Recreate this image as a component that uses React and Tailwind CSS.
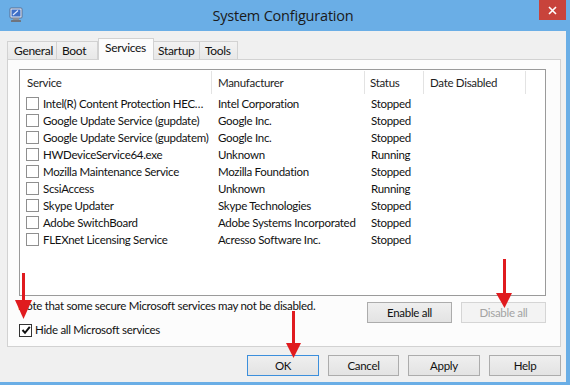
import React from "react";

const rows = [
  ["Intel(R) Content Protection HEC…", "Intel Corporation", "Stopped"],
  ["Google Update Service (gupdate)", "Google Inc.", "Stopped"],
  ["Google Update Service (gupdatem)", "Google Inc.", "Stopped"],
  ["HWDeviceService64.exe", "Unknown", "Running"],
  ["Mozilla Maintenance Service", "Mozilla Foundation", "Stopped"],
  ["ScsiAccess", "Unknown", "Running"],
  ["Skype Updater", "Skype Technologies", "Stopped"],
  ["Adobe SwitchBoard", "Adobe Systems Incorporated", "Stopped"],
  ["FLEXnet Licensing Service", "Acresso Software Inc.", "Stopped"],
];

function AppIcon() {
  return (
    <svg width="14" height="16" viewBox="0 0 14 16">
      <rect x="1" y="1" width="12" height="10" rx="1" fill="#e8eef6" stroke="#5a6f93" strokeWidth="1" />
      <rect x="2.5" y="2.5" width="9" height="7" fill="#3f6fc6" />
      <path d="M4 8 L9 3.5" stroke="#dfe9ff" strokeWidth="1.2" />
      <rect x="4" y="11" width="6" height="2" fill="#8a8f99" />
      <rect x="2" y="13" width="10" height="2" rx="0.5" fill="#6f747d" />
    </svg>
  );
}

function Box() {
  return <div className="w-[13px] h-[13px] shrink-0 border border-[#8f8f8f] bg-white" />;
}

function Btn({ children, w = "w-[72px]", extra = "" }) {
  return (
    <div
      className={`${w} h-[21px] flex items-center justify-center border bg-linear-to-b from-[#efefef] to-[#e3e3e3] text-[#111] ${extra}`}
    >
      {children}
    </div>
  );
}

export default function App() {
  return (
    <div className="relative w-[570px] h-[385px] overflow-hidden bg-[#f0f0f0] border-r-4 border-b-[3px] border-[#6aaee6] font-['Lato',sans-serif] text-[11.5px] tracking-[-0.3px] text-[#111]">
      {/* Title bar */}
      <div className="h-[31px] bg-[#6aaee6] grid grid-cols-[1fr_auto_1fr] items-start">
        <div className="pl-[9px] pt-[7px]">
          <AppIcon />
        </div>
        <div className="pt-[5px] text-[14.5px] text-[#1a1a1a] font-['Open_Sans',sans-serif] tracking-[-0.2px]">System Configuration</div>
        <div className="flex justify-end">
          <div className="w-[27px] h-[20px] bg-[#c8433b] flex items-center justify-center text-white">
            <svg width="9" height="9" viewBox="0 0 9 9">
              <path d="M1 1 L8 8 M8 1 L1 8" stroke="#fff" strokeWidth="1.6" />
            </svg>
          </div>
        </div>
      </div>

      {/* Tabs + panel */}
      <div className="pl-[7px] pr-[5px] pt-[7px]">
        <div className="flex items-end h-[21px] relative z-10 text-[12px]">
          <div className="w-[50px] h-[18px] border border-b-0 border-[#d2d2d2] bg-linear-to-b from-[#f2f2f2] to-[#e8e8e8] pl-[6px] leading-[17px]">General</div>
          <div className="w-[41px] h-[18px] border border-b-0 border-l-0 border-[#d2d2d2] bg-linear-to-b from-[#f2f2f2] to-[#e8e8e8] pl-[5px] leading-[17px]">Boot</div>
          <div className="w-[56px] h-[22px] -mb-px border border-b-0 border-[#d2d2d2] bg-[#fcfcfc] pl-[6px] leading-[18px]">Services</div>
          <div className="w-[46px] h-[18px] border border-b-0 border-l-0 border-[#d2d2d2] bg-linear-to-b from-[#f2f2f2] to-[#e8e8e8] pl-[4px] leading-[17px]">Startup</div>
          <div className="w-[38px] h-[18px] border border-b-0 border-l-0 border-[#d2d2d2] bg-linear-to-b from-[#f2f2f2] to-[#e8e8e8] pl-[5px] leading-[17px]">Tools</div>
        </div>
        <div className="h-[288px] border border-[#d2d2d2] bg-[#fcfcfc] pl-[11px] pr-[14px] pt-[9px]">
          {/* List */}
          <div className="h-[227px] border border-[#9a9a9a] bg-white overflow-hidden">
            <div className="flex h-[25px] items-stretch text-[#1e1e1e]">
              <div className="w-[192px] pl-[7px] flex items-center border-r border-[#e3e3e3] my-px">Service</div>
              <div className="w-[153px] pl-[6px] flex items-center border-r border-[#e3e3e3] my-px">Manufacturer</div>
              <div className="w-[59px] pl-[5px] flex items-center border-r border-[#e3e3e3] my-px">Status</div>
              <div className="w-[102px] pl-[6px] flex items-center border-r border-[#e3e3e3] my-px">Date Disabled</div>
            </div>
            {rows.map((r) => (
              <div key={r[0]} className="flex h-[17px] items-center whitespace-nowrap">
                <div className="w-[192px] pl-[6px] flex items-center gap-[4px] overflow-hidden">
                  <Box />
                  <span>{r[0]}</span>
                </div>
                <div className="w-[153px] pl-[6px] overflow-hidden">{r[1]}</div>
                <div className="w-[59px] pl-[6px]">{r[2]}</div>
              </div>
            ))}
          </div>

          {/* Below list */}
          <div className="flex items-start justify-between">
            <div className="flex flex-col">
              <div className="mt-[2px] h-[16px] leading-[16px] -ml-px whitespace-nowrap">
                Note that some secure Microsoft services may not be disabled.
              </div>
              <div className="mt-[8px] h-[16px] flex items-center gap-[3px]">
                <div className="w-[13px] h-[13px] border border-[#333] bg-white flex items-center justify-center">
                  <svg width="10" height="10" viewBox="0 0 10 10">
                    <path d="M1.5 5 L4 7.8 L8.8 1.8" fill="none" stroke="#111" strokeWidth="2" />
                  </svg>
                </div>
                <span>Hide all Microsoft services</span>
              </div>
            </div>
            <div className="mt-[6px] flex gap-[9px]">
              <Btn w="w-[85px]" extra="border-[#acacac]">Enable all</Btn>
              <div className="w-[85px] h-[21px] flex items-center justify-center border border-[#d5d5d5] bg-[#f3f3f3] text-[#a3a3a3]">
                Disable all
              </div>
            </div>
          </div>
        </div>

        {/* Bottom buttons */}
        <div className="flex justify-end gap-[9px] mt-[8px]">
          <Btn extra="border-[#3c8fdc]">OK</Btn>
          <Btn w="w-[71px]" extra="border-[#acacac]">Cancel</Btn>
          <Btn extra="border-[#acacac]">Apply</Btn>
          <Btn extra="border-[#acacac]">Help</Btn>
        </div>
      </div>

      {/* Red annotation arrows */}
      <svg className="absolute left-0 top-0 pointer-events-none" width="570" height="385" viewBox="0 0 570 385">
        <g fill="#e01b1f">
          <rect x="22" y="273" width="3" height="29" />
          <polygon points="15,300 32,300 23.5,319" />
          <rect x="503" y="259" width="3" height="36" />
          <polygon points="496,293 512,293 504.5,308" />
          <rect x="292" y="311" width="3" height="34" />
          <polygon points="286,343 301,343 293.5,358" />
        </g>
      </svg>
    </div>
  );
}
